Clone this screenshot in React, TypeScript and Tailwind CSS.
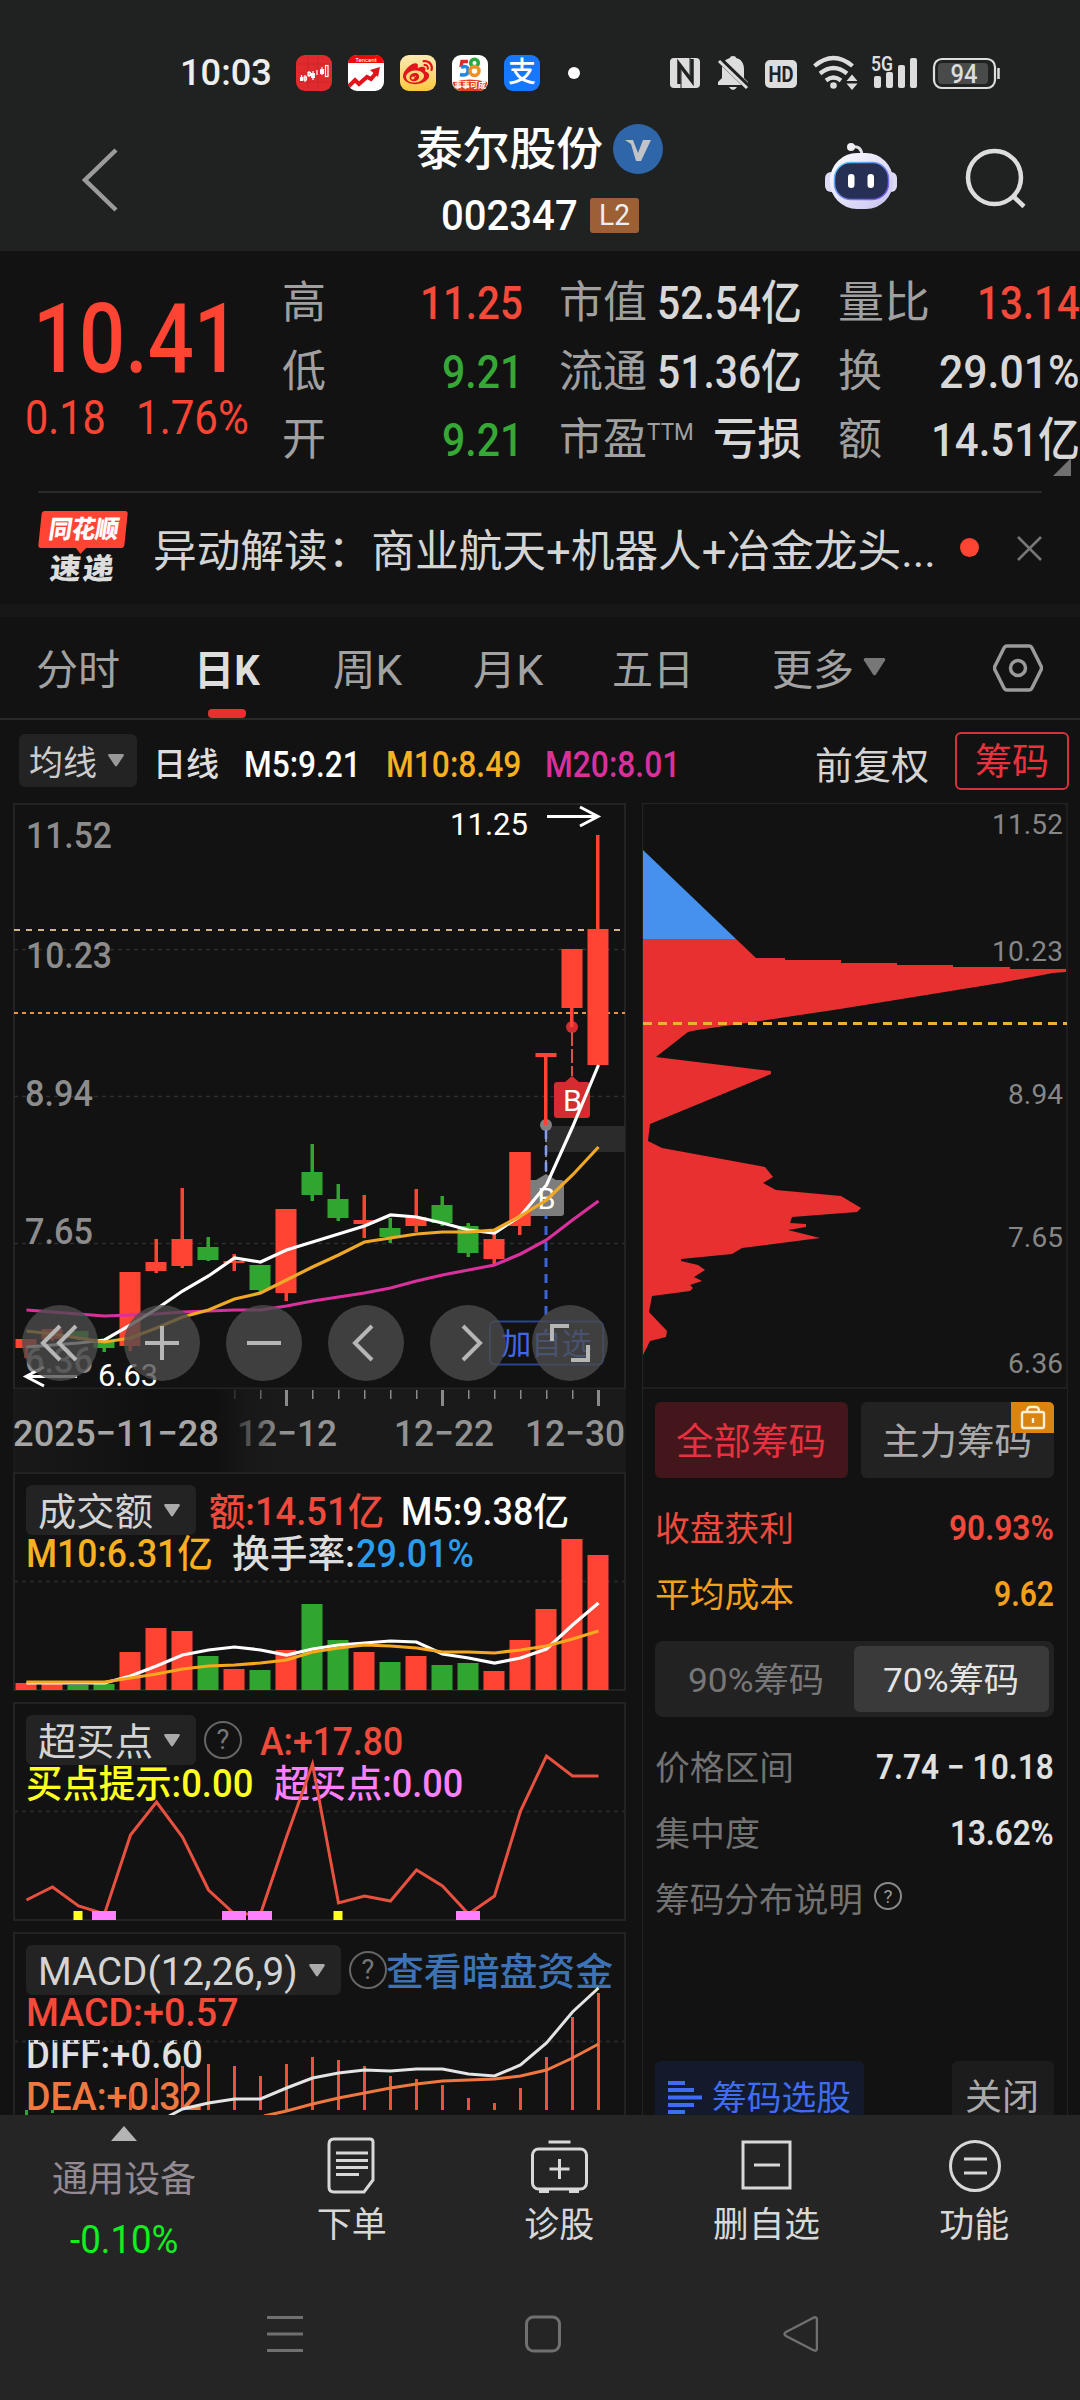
import { useLayoutEffect, useRef, useState } from "react";
import type { ReactNode } from "react";
import { FaWeibo } from "react-icons/fa";

// Text squeezed to a given width, close to the condensed digits of the quote font
const Fit = ({ w, className = "", children }: { w: number; className?: string; children: ReactNode }) => {
  const ref = useRef<HTMLSpanElement>(null);
  const [scale, setScale] = useState(1);

  useLayoutEffect(() => {
    if (ref.current) setScale(w / ref.current.offsetWidth);
  }, [w]);

  return (
    <span className={`inline-block shrink-0 text-left whitespace-nowrap ${className}`} style={{ width: w }}>
      <span ref={ref} className="inline-block origin-left" style={{ transform: `scaleX(${scale})` }}>
        {children}
      </span>
    </span>
  );
};

const RED = "#ff4433";
const GREEN = "#30a530";
const STEP = 26;
const FIRST_X = 27;

const xAt = (i: number) => FIRST_X + STEP * i;
const toPoints = (ys: number[], start = 0) => ys.map((y, i) => `${xAt(i + start) - 0.5},${y}`).join(" ");

// [up, bodyTop, bodyBottom, high, low]
const candles: [boolean, number, number, number, number][] = [
  [true, 1339, 1348, 1339, 1358],
  [true, 1329, 1339, 1329, 1341],
  [false, 1331, 1338, 1331, 1340],
  [false, 1340, 1348, 1340, 1352],
  [true, 1272, 1346, 1272, 1351],
  [true, 1262, 1271, 1239, 1273],
  [true, 1239, 1266, 1188, 1268],
  [false, 1247, 1260, 1237, 1261],
  [true, 1261, 1263, 1254, 1271],
  [false, 1265, 1290, 1265, 1292],
  [true, 1209, 1293, 1209, 1301],
  [false, 1172, 1195, 1144, 1201],
  [false, 1199, 1218, 1184, 1221],
  [true, 1220, 1224, 1195, 1238],
  [false, 1228, 1237, 1218, 1243],
  [true, 1217, 1226, 1189, 1232],
  [false, 1205, 1223, 1196, 1226],
  [false, 1226, 1253, 1223, 1257],
  [true, 1239, 1259, 1234, 1264],
  [true, 1152, 1226, 1152, 1235],
  [true, 1053, 1057, 1053, 1125],
  [true, 949, 1008, 949, 1027],
  [true, 929, 1065, 835, 1065],
];

const ma5 = [1347, 1345, 1343, 1340, 1325, 1309, 1291, 1276, 1258, 1262, 1250, 1242, 1234, 1226, 1215, 1217, 1223, 1230, 1233, 1216, 1185, 1127, 1065];
const ma10 = [1331, 1334, 1338, 1342, 1338, 1328, 1317, 1310, 1299, 1293, 1280, 1267, 1255, 1242, 1238, 1234, 1232, 1232, 1230, 1216, 1200, 1175, 1147];
const ma20 = [1310, 1312, 1314, 1316, 1315, 1314, 1312, 1311, 1310, 1310, 1306, 1301, 1297, 1293, 1288, 1281, 1275, 1270, 1265, 1254, 1240, 1220, 1201];

const volumes: [boolean, number][] = [
  [true, 1683], [true, 1684], [false, 1685], [false, 1684], [true, 1652], [true, 1628], [true, 1631], [false, 1656],
  [true, 1669], [false, 1670], [true, 1650], [false, 1604], [false, 1640], [true, 1652], [false, 1662], [true, 1656],
  [false, 1665], [false, 1663], [true, 1671], [true, 1640], [true, 1609], [true, 1539], [true, 1555],
];
const vol5 = [1683, 1683, 1683, 1683, 1676, 1666, 1655, 1650, 1647, 1650, 1655, 1649, 1645, 1643, 1641, 1642, 1654, 1658, 1663, 1658, 1649, 1625, 1603];
const vol10 = [1682, 1682, 1682, 1682, 1678, 1674, 1669, 1666, 1665, 1663, 1660, 1652, 1648, 1645, 1646, 1648, 1652, 1652, 1653, 1650, 1646, 1639, 1631];

const overbought = [1900, 1887, 1906, 1914, 1835, 1802, 1837, 1890, 1914, 1914, 1837, 1764, 1903, 1896, 1901, 1870, 1886, 1914, 1896, 1811, 1756, 1776, 1776];

const macdTops = [2092, 2078, 2066, 2064, 2066, 2076, 2064, 2057, 2060, 2066, 2076, 2079, 2085, 2098, 2103, 2088, 2057, 2017, 1993];
const diff = [2109, 2103, 2099, 2099, 2088, 2078, 2073, 2070, 2071, 2069, 2069, 2074, 2076, 2065, 2043, 2012, 1988];
const dea = [2111, 2104, 2098, 2093, 2088, 2084, 2081, 2080, 2079, 2076, 2070, 2058, 2044];

const chips =
  "643,939 736,939 756,958 785,958 785,960 841,960 841,963 897,963 897,965 953,965 953,967 1010,967 1010,969 1066,969 1066,972 1053,973 1000,983 920,996 840,1009 760,1021 697,1030 688,1032 656,1057 771,1071 771,1074 650,1124 648,1141 662,1148 765,1167 773,1177 763,1183 776,1190 841,1196 861,1208 857,1212 792,1217 790,1223 806,1224 806,1227 788,1230 820,1238 742,1248 732,1254 681,1259 681,1261 698,1265 705,1270 694,1277 702,1281 690,1285 693,1288 690,1291 652,1296 649,1312 667,1331 666,1337 650,1341 643,1355";

const StatusBar = () => (
  <div className="flex h-[145px] items-center pl-[180px]">
    <Fit w={92} className="text-[37px] leading-none font-medium text-[#eee]">10:03</Fit>
    <div className="ml-[24px] flex gap-4">
      <svg width="36" height="36" viewBox="0 0 36 36">
        <rect width="36" height="36" rx="9" fill="#e02a2e" />
        <path d="M3 9h30M3 18h30M3 27h30M12 2v32M22 2v32" stroke="#c8262a" strokeWidth="0.800" />
        <g fill="#fff">
          <rect x="4" y="22" width="3" height="4" />
          <rect x="15" y="18" width="4" height="5" />
          <rect x="24" y="14" width="4" height="5" />
        </g>
        <g fill="none" stroke="#fff" strokeWidth="1.200">
          <path d="M9 20v7M13 16v6M21 15v5M5.500 20v2M17 16v9M26 12v8" />
          <rect x="8" y="22" width="2.500" height="3" />
          <rect x="12" y="17.500" width="2.500" height="3" />
          <rect x="29.500" y="10.500" width="2.500" height="11" />
        </g>
      </svg>
      <svg width="36" height="36" viewBox="0 0 36 36">
        <rect width="36" height="36" rx="9" fill="#fff" />
        <path d="M0 8q1-8 9-8h18q8 0 9 8z" fill="#f00808" />
        <text x="18" y="6.500" fontSize="6" textAnchor="middle" fill="#fff">Tencent</text>
        <path d="M1 31l6-6 4 4 8-7 4 2 6-7" fill="none" stroke="#e0141a" strokeWidth="4" />
        <path d="M22 15l10-3-2 10z" fill="#e0141a" />
      </svg>
      <div className="flex size-9 items-center justify-center rounded-[9px] bg-linear-to-b from-[#fde9b0] to-[#fbc936]">
        <FaWeibo className="size-[30px] text-[#e0161c]" />
      </div>
      <svg width="36" height="36" viewBox="0 0 36 36">
        <rect width="36" height="36" rx="9" fill="#fff" />
        <path d="M1 27q17-5 34 0v1q-1 8-8 8H9q-7 0-8-8z" fill="#e0401c" />
        <g fill="none" strokeWidth="3.500">
          <path d="M16 6.500H10L9 12" stroke="#e02c28" />
          <path d="M9 12.500q7-3 7 3t-8 4" stroke="#2488e0" />
          <circle cx="22.500" cy="8" r="3.800" stroke="#28a840" />
          <circle cx="22.500" cy="16" r="4.500" stroke="#f09020" />
        </g>
        <text x="18" y="33" fontSize="8" fontWeight="700" textAnchor="middle" fill="#fff">事事可成</text>
      </svg>
      <div className="flex size-9 items-center justify-center rounded-[9px] bg-[#1677ff] text-[28px] leading-none font-medium text-white">支</div>
    </div>
    <span className="ml-7 size-3 rounded-full bg-white" />
    <svg className="ml-[90px]" width="350" height="36" viewBox="670 54 350 36" fill="#ddd">
      <rect x="670" y="57" width="30" height="30" rx="4" />
      <path d="M679 83V63l13 17V58" fill="none" stroke="#1f2221" strokeWidth="3.500" />
      <path d="M690 57v20M681 88V68" fill="none" stroke="#1f2221" strokeWidth="1" />
      <path d="M718 84v-3l4-4v-9c0-7 4-10 8-11q0-2 3-2t3 2c5 1 8 5 8 11v9l4 4v3z" />
      <path d="M729 86h8q-4 6-8 0z" />
      <path d="M720 59l29 28" stroke="#1f2221" strokeWidth="6" />
      <path d="M719 60l28 27" stroke="#ddd" strokeWidth="3" />
      <rect x="765" y="59" width="32" height="28" rx="5" />
      <text x="781" y="81" fontSize="22" fontWeight="700" textAnchor="middle" textLength="25" lengthAdjust="spacingAndGlyphs" fill="#1f2221">HD</text>
      <g fill="none" stroke="#ddd" strokeWidth="4.200">
        <path d="M814.500 65q19-16 38 0" />
        <path d="M820 72.500q13.500-11 27 0" />
        <path d="M826 79.500q7.500-6 15 0" />
      </g>
      <circle cx="833.500" cy="84.500" r="3.300" />
      <path d="M846.500 80l5.500-6.500 5.500 6.500zM846.500 82.500l5.500 6.500 5.500-6.500z" />
      <text x="871" y="69.500" fontSize="20" fontWeight="600" textLength="22" lengthAdjust="spacingAndGlyphs">5G</text>
      <rect x="874" y="75" width="7" height="12" rx="2" />
      <rect x="886" y="71" width="7" height="16" rx="2" />
      <rect x="898" y="64" width="7" height="23" rx="2" />
      <rect x="910" y="57" width="7" height="30" rx="2" />
      <rect x="934" y="58" width="61" height="29" rx="8" fill="none" stroke="#ddd" strokeWidth="2.200" />
      <rect x="938" y="62" width="50" height="21" rx="4" fill="#484b4a" />
      <path d="M998.500 67v11" stroke="#ddd" strokeWidth="2.500" />
      <text x="964" y="81.500" fontSize="25" fontWeight="500" textAnchor="middle" textLength="27" lengthAdjust="spacingAndGlyphs">94</text>
    </svg>
  </div>
);

const Header = () => (
  <div className="flex h-[106px] items-start">
    <svg className="mt-[3px] ml-20" width="40" height="64" viewBox="0 0 40 64" fill="none" stroke="#9b9b9b" strokeWidth="4.500">
      <path d="M36 2L5 32l31 30" />
    </svg>
    <div className="-mt-[25px] ml-[180px] w-[516px] pl-[116px] text-white">
      <div className="flex h-[58px] items-center gap-[10px]">
        <Fit w={187} className="text-[46px] leading-none font-medium">泰尔股份</Fit>
        <svg width="50" height="50" viewBox="0 0 50 50">
          <circle cx="25" cy="25" r="25" fill="#2f65a9" />
          <path d="M12 16h8l5 13 5-13h8L28 37h-5l-5-17z" fill="#c0c4c8" />
        </svg>
      </div>
      <div className="mt-[15px] flex h-[44px] items-center gap-3 pl-[25px]">
        <Fit w={137} className="text-[43px] leading-none font-medium">002347</Fit>
        <span className="flex h-[35px] w-[49px] items-center justify-center rounded-[3px] bg-[#9d6034]">
          <Fit w={31} className="text-[29px] leading-none text-[#eee]">L2</Fit>
        </span>
      </div>
    </div>
    <svg className="-mt-1 ml-[7px] shrink-0" width="76" height="70" viewBox="823 141 76 70">
      <defs>
        <linearGradient id="bot" x1="0" y1="0" x2="1" y2="1">
          <stop offset="0" stopColor="#fff" />
          <stop offset="0.500" stopColor="#e4e2f8" />
          <stop offset="1" stopColor="#c4c0f0" />
        </linearGradient>
        <linearGradient id="rim" x1="0" y1="0" x2="1" y2="1">
          <stop offset="0" stopColor="#58c8f0" />
          <stop offset="1" stopColor="#7a4cf0" />
        </linearGradient>
      </defs>
      <path d="M852 147q9-2 10 8" fill="none" stroke="#e0e0e8" strokeWidth="3" />
      <circle cx="851" cy="147" r="4" fill="#f0f0f4" />
      <rect x="825" y="172" width="72" height="20" rx="6" fill="#dcdaf6" />
      <rect x="830" y="153" width="63" height="56" rx="27" fill="url(#bot)" />
      <rect x="834.500" y="162.500" width="54" height="37" rx="16" fill="#262f54" stroke="url(#rim)" strokeWidth="1.500" />
      <rect x="848" y="174" width="6.500" height="14" rx="3.200" fill="#fff" />
      <rect x="867.500" y="174" width="6.500" height="14" rx="3.200" fill="#fff" />
    </svg>
    <svg className="ml-[65px] shrink-0" width="64" height="66" viewBox="964 145 64 66" fill="none" stroke="#ddd" strokeWidth="4.500">
      <circle cx="994.500" cy="177.500" r="26.500" />
      <path d="M1013 196l11 10.500" strokeWidth="4.500" />
    </svg>
  </div>
);

const Quote = () => (
  <div className="flex h-[240px] overflow-hidden text-[#d8d8d8]">
    <div className="w-[282px] pl-[25px] text-[#ff4433]">
      <div className="mt-[39px] h-[98px] pl-[8px]">
        <Fit w={207} className="text-[96px] leading-[98px] font-medium">10.41</Fit>
      </div>
      <div className="mt-[6px] flex h-[48px] items-center gap-[30px] text-[48px] leading-none">
        <Fit w={81}>0.18</Fit>
        <Fit w={113}>1.76%</Fit>
      </div>
    </div>
    <div className="flex w-[241px] flex-col pt-[18px] text-[44px] leading-[68.500px] font-medium">
      {[["高", "11.25", 103, "text-[#f5493a]"], ["低", "9.21", 81, "text-[#36a836]"], ["开", "9.21", 81, "text-[#36a836]"]].map(([label, value, w, color], i) => (
        <div key={i} className="flex h-[68.500px] justify-between">
          <span className="font-normal text-[#a0a0a0]">{label}</span>
          <Fit w={w as number} className={`text-[47px] ${color}`}>{value}</Fit>
        </div>
      ))}
    </div>
    <div className="ml-[36px] w-[243px] pt-[18px] text-[44px] leading-[68.500px] font-medium">
      <div className="flex h-[68.500px] justify-between">
        <Fit w={88} className="font-normal text-[#a0a0a0]">市值</Fit>
        <Fit w={145} className="text-[47px]">52.54亿</Fit>
      </div>
      <div className="flex h-[68.500px] justify-between">
        <Fit w={88} className="font-normal text-[#a0a0a0]">流通</Fit>
        <Fit w={145} className="text-[47px]">51.36亿</Fit>
      </div>
      <div className="flex h-[68.500px]">
        <Fit w={88} className="font-normal text-[#a0a0a0]">市盈</Fit>
        <Fit w={47} className="text-[24px] leading-[52px] font-normal text-[#a0a0a0]">TTM</Fit>
        <Fit w={89} className="ml-auto">亏损</Fit>
      </div>
    </div>
    <div className="relative ml-[36px] w-[242px] pt-[18px] text-[44px] leading-[68.500px]">
      <div className="flex h-[68.500px] justify-between">
        <Fit w={92} className="text-[#a0a0a0]">量比</Fit>
        <Fit w={103} className="text-[47px] font-medium text-[#f5493a]">13.14</Fit>
      </div>
      <div className="flex h-[68.500px] justify-between">
        <Fit w={44} className="text-[#a0a0a0]">换</Fit>
        <Fit w={141} className="text-[47px] font-medium">29.01%</Fit>
      </div>
      <div className="flex h-[68.500px] justify-between">
        <Fit w={44} className="text-[#a0a0a0]">额</Fit>
        <Fit w={149} className="text-[47px] font-medium">14.51亿</Fit>
      </div>
      <svg className="absolute right-[9px] bottom-[15px]" width="18" height="18">
        <path d="M18 0v18H0z" fill="#707070" />
      </svg>
    </div>
  </div>
);

const NewsBar = () => (
  <div className="mx-[38px] flex h-[113px] items-start border-t-2 border-[#292929]">
    <div className="mt-[18px] w-[90px] shrink-0 font-black">
      <div className="relative ml-[2px] flex h-[37px] w-[86px] -skew-x-6 items-center justify-center rounded-[3px] bg-[#ff4433] pl-0.5">
        <Fit w={70} className="-skew-x-3 text-[25px] leading-none text-white">同花顺</Fit>
        <svg className="absolute top-[36px] left-[37px]" width="12" height="7"><path d="M0 0h12L6 7z" fill="#ff4433" /></svg>
      </div>
      <Fit w={66} className="mt-[6px] ml-[12px] -skew-x-6 text-[29px] leading-[31px] tracking-[2px] text-[#ddd]">速递</Fit>
    </div>
    <Fit w={783} className="mt-[27px] ml-[25px] text-[44px] leading-[64px] text-[#d4d4d4]">异动解读：商业航天+机器人+冶金龙头...</Fit>
    <span className="mt-[45px] ml-[24px] size-[19px] rounded-full bg-[#ff4433]" />
    <svg className="mt-[43px] ml-auto" width="25" height="25" stroke="#777" strokeWidth="2.500"><path d="M1 1l23 23M24 1L1 24" /></svg>
  </div>
);

const Caret = ({ className }: { className: string }) => (
  <svg className={className} viewBox="0 0 18 14"><path d="M1.500 0h15q1.500.5.8 1.800L10 13q-1 1-2 0L.7 1.800Q0 .5 1.500 0z" fill="currentColor" /></svg>
);

const Tabs = () => (
  <div className="flex h-[103px] items-start border-b-2 border-[#292929] pt-[8px] pl-[36px] text-[42px] leading-[90px] text-[#a2a2a2]">
    <Fit w={84} className="pt-px">分时</Fit>
    <div className="ml-[74px] flex w-[66px] flex-col items-center">
      <Fit w={66} className="h-[84px] pt-px font-bold text-[#ddd]">日K</Fit>
      <span className="h-[9px] w-[38px] rounded-[4px] bg-[#e83030]" />
    </div>
    <Fit w={69} className="ml-[73px] pt-px">周K</Fit>
    <Fit w={70} className="ml-[71px] pt-px">月K</Fit>
    <Fit w={82} className="ml-[69px] pt-px">五日</Fit>
    <Fit w={82} className="ml-[78px] pt-px">更多</Fit>
    <Caret className="mt-[33px] ml-[9px] h-[18px] w-[23px] text-[#777]" />
    <svg className="mt-[19px] ml-[107px]" width="50" height="48" viewBox="0 0 50 48" fill="none" stroke="#9a9a9a" strokeWidth="3.500">
      <path d="M14 2h22q2 0 3 2l9 18q1 2 0 4l-9 18q-1 2-3 2H14q-2 0-3-2L2 26q-1-2 0-4l9-18q1-2 3-2z" />
      <circle cx="25" cy="24" r="7.500" />
    </svg>
  </div>
);

const MaRow = () => (
  <div className="flex h-[83px] items-center pb-0.5 pl-[19px] text-[36px] leading-none font-medium">
    <span className="flex h-[53px] w-[118px] items-center rounded-md bg-[#232323] pl-[10px] text-[#ccc]">
      <Fit w={68} className="pt-[4px] text-[34px] font-normal">均线</Fit>
      <Caret className="ml-[10px] h-[13px] w-[18px] text-[#999]" />
    </span>
    <Fit w={66} className="ml-[16px] pt-[8px] text-[33px] text-[#ddd]">日线</Fit>
    <Fit w={117} className="ml-[25px] pt-[8px] text-white">M5:9.21</Fit>
    <Fit w={135} className="ml-[25px] pt-[8px] text-[#f8b020]">M10:8.49</Fit>
    <Fit w={135} className="ml-[24px] pt-[8px] text-[#d9309c]">M20:8.01</Fit>
    <Fit w={114} className="ml-[135px] pt-[11px] text-[38px] font-normal text-[#d4d4d4]">前复权</Fit>
    <span className="ml-[26px] flex h-[58px] w-[114px] items-center justify-center rounded-md border-2 border-[#d8303c] text-[#ec303c]">
      <Fit w={74} className="pt-[4px] text-[37px] font-normal">筹码</Fit>
    </span>
  </div>
);

const scaleLabels: [string, number, number, number][] = [
  ["11.52", 26, 848, 86],
  ["10.23", 26, 968, 86],
  ["8.94", 25, 1106, 68],
  ["7.65", 25, 1244, 68],
  ["6.36", 25, 1373, 68],
];

// the round chart controls: [cx, icon path]
const controls: [number, string][] = [
  [60, "M60 1326l-17 17 17 17M76 1326l-17 17 17 17"],
  [162, "M145 1343h34M162 1326v34"],
  [264, "M247 1343h34"],
  [366, "M372 1326l-17 17 17 17"],
  [468, "M463 1326l17 17-17 17"],
  [570, "M552 1341v-15h17M588 1345v15h-17"],
];

const KChart = () => (
  <svg className="block" width="613" height="586" viewBox="13 803 613 586">
    <rect x="14" y="804" width="611" height="584.500" fill="none" stroke="#232323" strokeWidth="2" />
    <g stroke="#2e2e2e" strokeWidth="1.500" strokeDasharray="4 4">
      <path d="M14 949.500h611M14 1096.500h611M14 1243.500h611" />
    </g>
    <g fill="#8c8c8c" fontSize="37.500" fontWeight="500">
      {scaleLabels.map(([t, x, y, w]) => (
        <text key={t} x={x} y={y} textLength={w} lengthAdjust="spacingAndGlyphs">{t}</text>
      ))}
    </g>
    <rect x="546" y="1126" width="79" height="26" fill="#2b2b2b" />
    <path d="M14 930h611" stroke="#cdb681" strokeWidth="2" strokeDasharray="6 6" />
    <path d="M14 1013h611" stroke="#e8934a" strokeWidth="2" strokeDasharray="4 4" />
    <circle cx="572" cy="1027" r="6" fill="#d42c30" />
    <circle cx="546" cy="1125" r="6" fill="#808080" />
    {candles.map(([up, top, bottom, high, low], i) => (
      <g key={i} fill={up ? RED : GREEN}>
        <rect x={xAt(i) - 2.500 + (i > 18 ? -0.5 : 0)} y={high} width="3.500" height={low - high} />
        <rect x={xAt(i) - 11.500} y={top} width="21" height={bottom - top} />
      </g>
    ))}
    <path d="M546 1130v191" stroke="#3f63d8" strokeWidth="3" strokeDasharray="9 7" />
    <path d="M546 1130v45" stroke="#aab4cc" strokeWidth="1.500" strokeDasharray="12 3" />
    <path d="M572 1032v44" stroke="#d85048" strokeWidth="2" strokeDasharray="14 3" />
    <path d="M536 1180l10-6 10 6h5a3 3 0 0 1 3 3v30a3 3 0 0 1-3 3h-31a3 3 0 0 1-3-3v-30a3 3 0 0 1 3-3z" fill="#7d7d7d" />
    <rect x={xAt(19) - 11.500} y="1152" width="21" height="74" fill={RED} />
    <path d="M565 1082l7-6 7 6h8a3 3 0 0 1 3 3v30a3 3 0 0 1-3 3h-30a3 3 0 0 1-3-3v-30a3 3 0 0 1 3-3z" fill="#d42c30" />
    <g fill="#fff" fontSize="30" textAnchor="middle">
      <text x="546.500" y="1209" textLength="18" lengthAdjust="spacingAndGlyphs">B</text>
      <text x="572.500" y="1111" textLength="19" lengthAdjust="spacingAndGlyphs">B</text>
    </g>
    <g fill="none" strokeWidth="3.200">
      <polyline points={toPoints(ma20)} stroke="#d9309c" />
      <polyline points={toPoints(ma5)} stroke="#fff" />
      <polyline points={toPoints(ma10)} stroke="#f0a828" />
    </g>
    <g fill="#fff" fontSize="31">
      <text x="450" y="835" textLength="78" lengthAdjust="spacingAndGlyphs">11.25</text>
      <text x="98" y="1386" textLength="60" lengthAdjust="spacingAndGlyphs">6.63</text>
    </g>
    <g fill="none" stroke="#fff" strokeWidth="3">
      <path d="M547 816.500h51M580 807l18 9.500-18 9.500" />
      <path d="M77 1376.500H27M44 1367l-18 9.500 18 9.500" />
    </g>
    <rect x="490" y="1321.500" width="113" height="43" rx="5" fill="none" stroke="#2a4590" strokeWidth="2" />
    <text x="501" y="1354" fontSize="30" textLength="91" lengthAdjust="spacingAndGlyphs" fill="#3f68e8">加自选</text>
    {controls.map(([cx, d]) => (
      <g key={cx}>
        <circle cx={cx} cy="1343" r="38" fill="#4b4b4b" fillOpacity="0.780" />
        <path d={d} fill="none" stroke="#b6b6b6" strokeWidth="4" />
      </g>
    ))}
  </svg>
);

const DateAxis = () => (
  <svg className="block bg-[#1a1a1a]" width="613" height="83" viewBox="13 1389 613 83">
    <defs>
      <linearGradient id="fade" x1="0" x2="1">
        <stop offset="0" stopColor="#141414" stopOpacity="0.200" />
        <stop offset="0.500" stopColor="#101010" />
        <stop offset="0.750" stopColor="#101010" />
        <stop offset="1" stopColor="#1a1a1a" stopOpacity="0" />
      </linearGradient>
    </defs>
    <g fill="#8a8a8a">
      {candles.map((_, i) => {
        if (i < 8) return null;
        const tall = i % 6 === 4;
        return <rect key={i} x={xAt(i) - (tall ? 2 : 1)} y="1390" width={tall ? 3 : 1.500} height={tall ? 16 : 9} />;
      })}
    </g>
    <g fill="#929292" fontSize="37.500" fontWeight="500">
      <text x="237" y="1446" textLength="100" lengthAdjust="spacingAndGlyphs">12−12</text>
      <text x="394" y="1446" textLength="100" lengthAdjust="spacingAndGlyphs">12−22</text>
      <text x="525" y="1446" textLength="100" lengthAdjust="spacingAndGlyphs">12−30</text>
    </g>
    <rect x="13" y="1389" width="270" height="83" fill="url(#fade)" />
    <text x="13" y="1446" textLength="206" lengthAdjust="spacingAndGlyphs" fill="#a6a6a6" fontSize="37.500" fontWeight="500">2025−11−28</text>
  </svg>
);

const Picker = ({ w, children }: { w: number; children: ReactNode }) => (
  <span className="flex h-[50px] shrink-0 items-center gap-[10px] rounded-md bg-[#232323] px-[12px] text-[#d4d4d4]">
    <Fit w={w} className="pt-[4px] font-normal">{children}</Fit>
    <Caret className="mr-[3px] h-[13px] w-[18px] text-[#aaa]" />
  </span>
);

const Help = ({ className }: { className: string }) => (
  <span className={`flex shrink-0 items-center justify-center rounded-full leading-none ${className}`}>?</span>
);

const Panel = ({ className, children }: { className: string; children: ReactNode }) => (
  <div className={`relative border-2 border-[#232323] px-[11px] pt-[11px] text-[38px] leading-none font-medium ${className}`}>{children}</div>
);

const VolumePanel = () => (
  <Panel className="h-[219px]">
    <div className="flex items-center">
      <Picker w={115}>成交额</Picker>
      <Fit w={175} className="ml-[13px] pt-[3px] text-[#f04a3c]">额:14.51亿</Fit>
      <Fit w={168} className="ml-[17px] pt-[3px] text-white">M5:9.38亿</Fit>
    </div>
    <div className="flex h-[37px] items-center">
      <Fit w={187} className="text-[#f8b020]">M10:6.31亿</Fit>
      <Fit w={123} className="ml-[19px] text-[#ddd]">换手率:</Fit>
      <Fit w={118} className="ml-px text-[#2a9cec]">29.01%</Fit>
    </div>
    <svg className="absolute -top-0.5 -left-0.5" width="613" height="219" viewBox="13 1472 613 219">
      <path d="M14 1581.500h611" stroke="#262626" strokeWidth="2" strokeDasharray="4 4" />
      {volumes.map(([up, top], i) => (
        <rect key={i} x={xAt(i) - 11.500} y={top} width="21" height={1690 - top} fill={up ? RED : GREEN} />
      ))}
      <g fill="none" strokeWidth="3.200">
        <polyline points={toPoints(vol5)} stroke="#fff" />
        <polyline points={toPoints(vol10)} stroke="#f8a820" />
      </g>
    </svg>
  </Panel>
);

const OverboughtPanel = () => (
  <Panel className="mt-[11px] h-[219px]">
    <div className="flex items-center">
      <Picker w={115}>超买点</Picker>
      <Help className="ml-[8px] size-[38px] border-[2.500px] border-[#666] text-[27px] font-normal text-[#777]" />
      <Fit w={143} className="ml-[18px] pt-[3px] text-[#f04a3c]">A:+17.80</Fit>
    </div>
    <div className="flex h-[37px] items-center">
      <Fit w={227} className="text-[#ffff20]">买点提示:0.00</Fit>
      <Fit w={189} className="ml-[21px] text-[#ff80ff]">超买点:0.00</Fit>
    </div>
    <svg className="absolute -top-0.5 -left-0.5" width="613" height="219" viewBox="13 1702 613 219">
      <path d="M14 1811.500h611" stroke="#262626" strokeWidth="2" strokeDasharray="4 4" />
      <polyline points={toPoints(overbought)} fill="none" stroke="#e8503f" strokeWidth="3" />
      {[2, 12].map((i) => <rect key={i} x={xAt(i) - 5.500} y="1911" width="9" height="9" fill="#ffff20" />)}
      {[3, 8, 9, 17].map((i) => <rect key={i} x={xAt(i) - 13} y="1911" width="24" height="9" fill="#ff80ff" />)}
    </svg>
  </Panel>
);

const MacdPanel = () => (
  <Panel className="mt-[11px] h-[183px] overflow-hidden border-b-0">
    <div className="flex items-center">
      <Picker w={260}>MACD(12,26,9)</Picker>
      <Help className="ml-[8px] size-[38px] border-[2.500px] border-[#666] text-[27px] font-normal text-[#777]" />
      <Fit w={227} className="-ml-px pt-[3px] text-[#3d72b4]">查看暗盘资金</Fit>
    </div>
    <div className="-mt-[3px] flex flex-col leading-[42px]">
      <Fit w={213} className="h-[42px] text-[#f5493a]">MACD:+0.57</Fit>
      <Fit w={177} className="h-[42px] text-[#e0e0e0]">DIFF:+0.60</Fit>
      <Fit w={176} className="h-[42px] text-[#f07840]">DEA:+0.32</Fit>
    </div>
    <svg className="absolute -top-0.5 -left-0.5" width="613" height="183" viewBox="13 1932 613 183">
      <path d="M14 2041.500h611" stroke="#262626" strokeWidth="2" strokeDasharray="4 4" />
      {macdTops.map((top, i) => <rect key={i} x={xAt(i + 4) - 2} y={top} width="3" height={2110 - top} fill="#ee5040" />)}
      <path d="M25 2110h3v5h-3zM51 2110h3v3h-3z" fill={GREEN} />
      <g fill="none" strokeWidth="3">
        <polyline points={`169,2116 ${toPoints(diff, 6)}`} stroke="#e4e4e4" />
        <polyline points={`264,2116 ${toPoints(dea, 10)}`} stroke="#f07840" />
      </g>
    </svg>
  </Panel>
);

const ChipChart = () => (
  <svg className="block" width="426" height="586" viewBox="642 803 426 586">
    <path d="M642.500 1388V803.500h424.500V1388" fill="none" stroke="#232323" strokeWidth="1.500" />
    <path d="M642 1388h426" stroke="#232323" strokeWidth="1.500" />
    <path d="M643 850l93 89h-93z" fill="#4791ee" />
    <polygon points={chips} fill="#e83030" />
    <path d="M643 1023.500h424" stroke="#eeb030" strokeWidth="3" strokeDasharray="9 6" />
    <g fill="#868686" fontSize="28" textAnchor="end">
      <text x="1063" y="834" textLength="71">11.52</text>
      <text x="1063" y="961" textLength="71">10.23</text>
      <text x="1063" y="1104" textLength="55">8.94</text>
      <text x="1063" y="1247" textLength="55">7.65</text>
      <text x="1063" y="1373" textLength="55">6.36</text>
    </g>
  </svg>
);

const Stat = ({ label, labelW, value, valueW, labelColor, valueColor }: { label: string; labelW: number; value: string; valueW: number; labelColor: string; valueColor: string }) => (
  <div className="flex h-[66px] items-center justify-between leading-none">
    <Fit w={labelW} className={`pt-px text-[34px] ${labelColor}`}>{label}</Fit>
    <Fit w={valueW} className={`text-[35px] font-semibold ${valueColor}`}>{value}</Fit>
  </div>
);

const ChipPanel = () => (
  <div className="flex h-[726px] flex-col overflow-hidden border-x-[1.500px] border-[#232323] pt-[13px] pr-[13px] pl-[12px]">
    <div className="flex shrink-0 justify-between text-[37px] leading-none">
      <span className="flex h-[76px] w-[193px] items-center justify-center rounded-md bg-[#42161b] pt-[5px] pr-[2px] text-[#e8303e]">
        <Fit w={150}>全部筹码</Fit>
      </span>
      <span className="relative flex h-[76px] w-[193px] items-center justify-center rounded-md bg-[#222] pt-[5px] pr-[2px] text-[#aaa]">
        <Fit w={150}>主力筹码</Fit>
        <svg className="absolute top-0 right-0" width="43" height="31" viewBox="0 0 43 31">
          <path d="M0 0h38a5 5 0 0 1 5 5v26H0z" fill="#da8412" />
          <g fill="none" stroke="#fff0d8" strokeWidth="2.400">
            <rect x="11" y="10" width="22" height="16" rx="2" />
            <path d="M16 10q0-5 3-5h6q3 0 3 5M22 16v5" />
          </g>
        </svg>
      </span>
    </div>
    <div className="mt-[17px] shrink-0">
      <Stat label="收盘获利" labelW={139} value="90.93%" valueW={105} labelColor="text-[#f04a3c]" valueColor="text-[#f04a3c]" />
      <Stat label="平均成本" labelW={139} value="9.62" valueW={60} labelColor="text-[#f5a01c]" valueColor="text-[#f5a01c]" />
    </div>
    <div className="mt-[14px] flex h-[76px] shrink-0 items-center rounded-lg bg-[#222] pr-[5px] pl-[2px] text-[34px] leading-none">
      <span className="flex flex-1 items-center justify-center pt-[2px] text-[#777]"><Fit w={136}>90%筹码</Fit></span>
      <span className="flex h-[66px] w-[195px] items-center justify-center rounded-md bg-[#3a3a3a] pt-[2px] pr-[2px] text-[#e4e4e4]"><Fit w={136}>70%筹码</Fit></span>
    </div>
    <div className="mt-[17px] shrink-0">
      <Stat label="价格区间" labelW={139} value="7.74 − 10.18" valueW={178} labelColor="text-[#727272]" valueColor="text-[#e0e0e0]" />
      <Stat label="集中度" labelW={105} value="13.62%" valueW={104} labelColor="text-[#727272]" valueColor="text-[#e0e0e0]" />
    </div>
    <div className="flex h-[66px] shrink-0 items-center text-[34px] leading-none text-[#727272]">
      <Fit w={208} className="pt-px">筹码分布说明</Fit>
      <Help className="mb-1.5 ml-[11px] size-[28px] border-2 border-[#888] text-[19px] text-[#999]" />
    </div>
    <div className="mt-[129px] flex h-[76px] shrink-0 justify-between leading-none">
      <span className="flex h-[72px] w-[209px] items-center rounded-md bg-[#131a2b] pl-[13px] text-[34px] text-[#3f6cf0]">
        <svg width="34" height="33" fill="currentColor">
          <path d="M0 0h17v4H0zM0 7h26v4H0zM0 14.500h34v4H0zM0 22h26v4H0zM0 29h17v4H0z" />
        </svg>
        <Fit w={139} className="ml-[10px] pt-[2px]">筹码选股</Fit>
      </span>
      <span className="flex h-[72px] w-[102px] items-center justify-center rounded-md bg-[#1c1c1c] pt-[2px] pr-[2px] text-[36px] text-[#aaa]"><Fit w={74}>关闭</Fit></span>
    </div>
  </div>
);

const actions = [
  {
    label: "下单",
    w: 70,
    icon: (
      <g>
        <path d="M11 4h36q3 0 3 3v38l-9 12H11q-5 0-5-5V9q0-5 5-5z" />
        <path d="M13 18h32M13 25.500h32M13 32.500h32M13 39.500h23" />
      </g>
    ),
  },
  {
    label: "诊股",
    w: 70,
    icon: (
      <g>
        <path d="M17.500 7h22" />
        <rect x="1.500" y="14" width="54" height="40" rx="6" />
        <path d="M28.500 24v20M18.500 34h20M8 56.500h10M38 56.500h10" />
      </g>
    ),
  },
  {
    label: "删自选",
    w: 107,
    icon: (
      <g>
        <rect x="5" y="7" width="47" height="46" />
        <path d="M16 30h26" />
      </g>
    ),
  },
  {
    label: "功能",
    w: 70,
    icon: (
      <g>
        <circle cx="29" cy="31" r="24.500" />
        <path d="M18 24h23M18 38h23" />
      </g>
    ),
  },
];

const ActionBar = () => (
  <div className="flex h-[165px]">
    <div className="flex w-[248px] flex-col items-center pt-[11px]">
      <svg width="26" height="15"><path d="M13 0l13 15H0z" fill="#b4b4b4" /></svg>
      <Fit w={144} className="mt-[14px] h-[50px] text-[36px] leading-[50px] text-[#938a92]">通用设备</Fit>
      <Fit w={108} className="mt-[10px] h-[50px] text-[38px] leading-[50px] text-[#10f020]">-0.10%</Fit>
    </div>
    {actions.map(({ label, w, icon }) => (
      <div key={label} className="flex w-[207.500px] flex-col items-center pt-[20px]">
        <svg width="57" height="60" viewBox="0 0 57 60" fill="none" stroke="#d8d8d8" strokeWidth="3">{icon}</svg>
        <Fit w={w} className="mt-[6px] h-[50px] text-[35px] leading-[50px] text-[#d8d8d8]">{label}</Fit>
      </div>
    ))}
  </div>
);

const SystemNav = () => (
  <div className="flex h-[108px] items-center pl-[267px]">
    <svg width="36" height="38" stroke="#707070" strokeWidth="3"><path d="M0 2.500h36M0 19h36M0 35.500h36" /></svg>
    <svg className="ml-[222px]" width="36" height="38" fill="none" stroke="#707070" strokeWidth="3"><rect x="1.500" y="2" width="33" height="34" rx="7" /></svg>
    <svg className="ml-[221px]" width="36" height="38" fill="none" stroke="#707070" strokeWidth="2.500"><path d="M31 3q4-2 4 2v28q0 4-4 2L4 21q-3-2 0-4z" /></svg>
  </div>
);

export default function App() {
  return (
    <div className="flex h-[2400px] w-[1080px] flex-col overflow-hidden bg-[#121212] font-[Roboto,'Noto_Sans_CJK_SC',sans-serif]">
      <div className="bg-[#1f2221]">
        <StatusBar />
        <Header />
      </div>
      <Quote />
      <NewsBar />
      <div className="h-[13px] bg-[#171717]" />
      <Tabs />
      <MaRow />
      <div className="flex h-[1312px] items-start gap-4 overflow-hidden pl-[13px]">
        <div className="w-[613px]">
          <KChart />
          <DateAxis />
          <VolumePanel />
          <OverboughtPanel />
          <MacdPanel />
        </div>
        <div className="w-[426px]">
          <ChipChart />
          <ChipPanel />
        </div>
      </div>
      <div className="flex-1 bg-[#252525]">
        <ActionBar />
        <SystemNav />
      </div>
    </div>
  );
}
